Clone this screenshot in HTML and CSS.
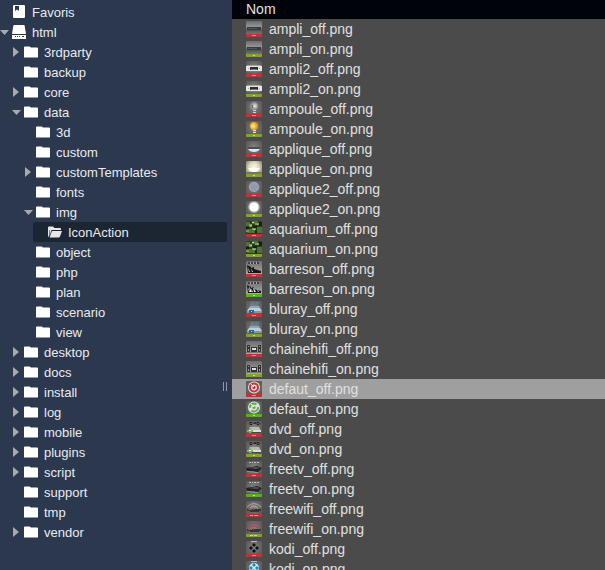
FILE: index.html
```html
<!DOCTYPE html>
<html lang="fr">
<head>
  <meta charset="UTF-8">
  <title>IconAction</title>
  <link rel="stylesheet" href="styles.css">
</head>
<body>

  <!-- Icônes -->
  <svg class="sprites" aria-hidden="true">
    <defs>
      <radialGradient id="tile" cx=".5" cy=".4" r=".8">
        <stop offset="0" stop-color="#858585"/><stop offset=".5" stop-color="#646464"/><stop offset="1" stop-color="#4e4e4e"/>
      </radialGradient>
      <linearGradient id="shelf" x1="0" y1="0" x2="0" y2="1">
        <stop offset="0" stop-color="#6c6c6c"/><stop offset=".35" stop-color="#949494"/><stop offset=".6" stop-color="#5a5a5a"/><stop offset="1" stop-color="#888"/>
      </linearGradient>
      <linearGradient id="silver" x1="0" y1="0" x2="0" y2="1">
        <stop offset="0" stop-color="#6d6d6d"/><stop offset="1" stop-color="#b8b8b8"/>
      </linearGradient>
      <radialGradient id="glow">
        <stop offset="0" stop-color="#fff"/><stop offset=".6" stop-color="#f8f8f2"/><stop offset="1" stop-color="#777" stop-opacity="0"/>
      </radialGradient>
      <radialGradient id="warm" cx=".5" cy=".4" r=".65">
        <stop offset="0" stop-color="#fffbe4"/><stop offset=".5" stop-color="#dad7b9"/><stop offset="1" stop-color="#77766a"/>
      </radialGradient>
      <radialGradient id="amber" cx=".4">
        <stop offset="0" stop-color="#fff3b0"/><stop offset=".5" stop-color="#fbc844"/><stop offset="1" stop-color="#e89a12"/>
      </radialGradient>
      <radialGradient id="glass" cx=".6">
        <stop offset="0" stop-color="#f0f0f0"/><stop offset=".5" stop-color="#b0b0b0"/><stop offset="1" stop-color="#888"/>
      </radialGradient>
    </defs>
    <symbol id="right" viewBox="0 0 15 20"><path fill="#aaa" d="M4 5l6 5-6 5z"/></symbol>
    <symbol id="down" viewBox="0 0 15 20"><path fill="#aaa" d="M3 8h9l-4.500 5z"/></symbol>
    <symbol id="folder" viewBox="0 0 14 14"><path fill="#fff" d="M1 1.500h4.500l1.500 1H13q1 0 1 1v8.500q0 .5-1 .5H1q-1 0-1-.5v-9.500q0-1 1-1z"/></symbol>
    <symbol id="open" viewBox="0 0 14 14"><path fill="#e4e6e8" d="M1 1.500h4l1.500 1.500H12q1 0 1 1v1H3.500L1.500 11V5H1v7q-1-.5-1-1.500v-8q0-1 1-1zM4 6h10l-2 5.500q-.3 1-1.500 1H1.500z"/></symbol>
    <symbol id="book" viewBox="0 0 14 14"><path fill="#fff" fill-rule="evenodd" d="M2 0h10q1 0 1 1v11q0 1-1 1H2q-1 0-1-1V1q0-1 1-1zM3 1v5l2-1.500L7 6V1z"/></symbol>
    <symbol id="drive" viewBox="0 0 14 14"><path fill="#fff" fill-rule="evenodd" d="M2 0h10q.5 0 .6.5L14 9H0L1.400.5Q1.500 0 2 0zM0 10h14v4H0zM3 11v1h1v-1zM5 11v1h1v-1zM7 11v1h1v-1zM10 11v1h2v-1z"/></symbol>

    <symbol id="ampli" viewBox="0 0 16 16"><path fill="url(#shelf)" d="M0 0h16v16H0z"/><path fill="#353b3e" d="M1 6h14v3H1z"/><path fill="#4e575b" d="M2 7h9v1H2z"/><path fill="#555" d="M0 9h16v1H0z"/></symbol>
    <symbol id="ampli2" viewBox="0 0 16 16"><path fill="url(#tile)" d="M0 0h16v16H0z"/><path fill="#a4a4a4" d="M1 4h14v1H1z"/><path fill="#e6e6e2" d="M0 5h16v5H0z"/><path fill="#2d2d2d" d="M4 6h8v3H4z"/><path fill="#777" d="M5 8h6v1H5zM1 10h14v1H1z"/><path fill="#b0b0b0" d="M2 7h1v1H2zM13 7h1v1h-1z"/></symbol>
    <symbol id="bulb-off" viewBox="0 0 16 16"><path fill="url(#tile)" d="M0 0h16v16H0z"/><path fill="url(#glass)" d="M8 1q4 0 4 4 0 2-2 4H6Q4 7 4 5q0-4 4-4z"/><path fill="#666" d="M6 4h1v3H6z"/><path fill="#ccc" d="M7 9h3v3H7z"/><path fill="#777" d="M7 10h3v1H7z"/></symbol>
    <symbol id="bulb-on" viewBox="0 0 16 16"><path fill="url(#tile)" d="M0 0h16v16H0z"/><path fill="url(#amber)" d="M8 1q4 0 4 4 0 2-2 4H6Q4 7 4 5q0-4 4-4z"/><path fill="#ddd" d="M7 9h3v3H7z"/><path fill="#b58e46" d="M7 10h3v1H7z"/></symbol>
    <symbol id="lamp-off" viewBox="0 0 16 16"><path fill="url(#tile)" d="M0 0h16v16H0z"/><path fill="#4e4e4e" d="M2 6h12v2H2z"/><path fill="#dfe5ec" d="M2 8h12q-2 3-6 3T2 8z"/></symbol>
    <symbol id="lamp-on" viewBox="0 0 16 16"><path fill="url(#warm)" d="M0 0h16v16H0z"/><path fill="#fff" d="M2 7h12q-2 4-6 4T2 7z"/><path fill="#77766a" d="M0 11h16v2H0z"/></symbol>
    <symbol id="spot-off" viewBox="0 0 16 16"><path fill="url(#tile)" d="M0 0h16v16H0z"/><circle cx="8" cy="6" r="5" fill="#a3adba"/><circle cx="8" cy="6" r="4" fill="#909cae"/></symbol>
    <symbol id="spot-on" viewBox="0 0 16 16"><path fill="url(#tile)" d="M0 0h16v16H0z"/><circle cx="8" cy="6" r="7" fill="url(#glow)"/><circle cx="8" cy="6" r="4" fill="#fff"/></symbol>
    <symbol id="aquarium" viewBox="0 0 16 16"><path fill="#2a3c20" d="M0 0h16v16H0z"/><path fill="#4e7138" d="M0 1h4v4H0zM6 0h6v3H6zM1 8h8v4H1zM11 6h5v6h-5z"/><path fill="#759854" d="M3 3h3v3H3zM9 2h4v2H9zM6 7h4v2H6zM0 9h3v2H0z"/><path fill="#acc083" d="M4 4h2v1H4zM11 3h1v1h-1zM7 8h2v1H7z"/><path fill="#16220f" d="M7 5h4v2H7zM0 6h3v2H0zM13 1h3v4h-3zM9 10h2v2H9z"/><path fill="#ccd6b9" d="M6 1h2v1H6z"/></symbol>
    <symbol id="barreson" viewBox="0 0 16 16"><path fill="url(#silver)" d="M0 0h16v16H0z"/><path fill="#404040" d="M2 1h11v2H2z"/><path fill="#aaa" d="M4 1h1v2H4zM7 1h1v2H7zM10 1h1v2h-1z"/><path fill="#151515" d="M1 4l4 2v1l3-1v2l7 2v2H2z"/><path fill="#eee" d="M2 6l2 5H3zM5 7l2 4H6z"/></symbol>
    <symbol id="barreson-on" viewBox="0 0 16 16"><use href="#barreson"/><path fill="#eee" d="M3 5l3 6H4zM7 6l3 5H8zM11 8l2 3h-1z"/></symbol>
    <symbol id="bluray" viewBox="0 0 16 16"><path fill="url(#tile)" d="M0 0h16v16H0z"/><path fill="none" stroke="#4f91b3" d="M5 2h3M5 4h3M10 2h3M9 4h3"/><path fill="#8aaabc" d="M4 5h9l1 2H3z"/><path fill="#c3ccd2" d="M3 7h11l2 3H1z"/><path fill="#88949b" d="M1 10h15v2H1z"/><path fill="#1768a1" d="M3 9h5v3H3z"/><path fill="#b6ddf5" d="M5 10h1v1H5z"/></symbol>
    <symbol id="chaine" viewBox="0 0 16 16"><path fill="url(#silver)" d="M0 0h16v16H0z"/><path fill="#333" d="M1 4h3v7H1zM12 4h3v7h-3zM5 6h6v5H5z"/><path fill="#ddd" d="M6 7h4v2H6z"/><path fill="#999" d="M2 5h1v1H2zM2 8h1v2H2zM13 5h1v1h-1zM13 8h1v2h-1z"/><path fill="#777" d="M0 11h16v1H0z"/></symbol>
    <symbol id="defaut-off" viewBox="0 0 16 16"><path fill="url(#tile)" d="M0 0h16v16H0z"/><circle cx="8" cy="6.500" r="6" fill="#ddd"/><circle cx="8" cy="6.500" r="4" fill="none" stroke="#c5343a" stroke-width="2"/><circle cx="8" cy="6.500" r="1.500" fill="#c5343a"/><path stroke="#eee" d="M5 3l3 3"/></symbol>
    <symbol id="defaut-on" viewBox="0 0 16 16"><path fill="url(#tile)" d="M0 0h16v16H0z"/><circle cx="8" cy="6.500" r="6" fill="#dde4da"/><circle cx="8" cy="6.500" r="4" fill="none" stroke="#63a653" stroke-width="2" stroke-dasharray="9 3"/><circle cx="8" cy="6.500" r="1.500" fill="#63a653"/><path stroke="#eee" d="M5 3l3 3"/></symbol>
    <symbol id="dvd" viewBox="0 0 16 16"><path fill="url(#tile)" d="M0 0h16v16H0z"/><path fill="none" stroke="#222" d="M4 1.500h2l1 1-1 1H4zM8 1l1 2 1-2M11 1.500h2l1 1-1 1h-2z"/><path fill="#b8b8b8" d="M4 6h9l2 4H2z"/><path fill="#ddd" d="M2 9h13v2H2z"/><path fill="#464646" d="M6 11h9v1H6z"/><path fill="#83ad69" d="M1 9h6v2H1zM3 7h2v5H3z"/><path fill="#eee" d="M3 9h2v1H3z"/></symbol>
    <symbol id="freetv" viewBox="0 0 16 16"><path fill="url(#tile)" d="M0 0h16v16H0z"/><path fill="#bbb" d="M3 1h2v1H3zM6 1h1v1H6zM8 1h2v1H8zM11 1h2v1h-2z"/><path fill="#222" d="M0 7l11-2 5 2-4 4-11-1z"/><path fill="#555" d="M2 7l9-1 3 1-4 1z"/><path fill="#999" d="M1 10l11 1v1L1 11z"/></symbol>
    <symbol id="freewifi" viewBox="0 0 16 16"><path fill="url(#tile)" d="M0 0h16v16H0z"/><path fill="none" stroke="#aaa" d="M1 6q7-7 14 0M4 7q4-4 8 0"/><path fill="#353535" d="M1 8h14v2H1zM4 10h9v1H4z"/><path fill="#b54b39" d="M2 8h4v1H2zM7 7h1v2H7z"/></symbol>
    <symbol id="freewifi-red" viewBox="0 0 16 16"><path fill="url(#tile)" d="M0 0h16v16H0z"/><path fill="none" stroke="#b83a54" d="M1 6q7-7 14 0M4 7q4-4 8 0"/><path fill="#353535" d="M1 8h14v2H1zM4 10h9v1H4z"/><path fill="#b54b39" d="M2 8h4v1H2zM7 7h1v2H7z"/></symbol>
    <symbol id="kodi-off" viewBox="0 0 16 16"><path fill="url(#tile)" d="M0 0h16v16H0z"/><path fill="#bbb" d="M5 0h6v1H5z"/><path fill="#111" d="M8 2l2 2-2 2-2-2zM5 5l2 2-2 2-2-2zM11 5l2 2-2 2-2-2zM8 8l2 2-2 2-2-2z"/></symbol>
    <symbol id="kodi-on" viewBox="0 0 16 16"><path fill="url(#tile)" d="M0 0h16v16H0z"/><path fill="#bbb" d="M5 0h6v1H5z"/><circle cx="8" cy="7" r="5" fill="#c9ebf8"/><path fill="#168dc1" d="M8 2l2 2-2 2-2-2zM5 5l2 2-2 2-2-2zM11 5l2 2-2 2-2-2zM8 8l2 2-2 2-2-2z"/></symbol>
    <symbol id="off" viewBox="0 0 16 16"><path fill="#df242d" d="M0 13h16v3H0z"/><path fill="#f08a8e" d="M6 14h4v1H6z"/></symbol>
    <symbol id="off-wide" viewBox="0 0 16 16"><path fill="#df242d" d="M0 13h16v3H0z"/><path fill="#f08a8e" d="M4 14h3v1H4zM8 14h4v1H8z"/></symbol>
    <symbol id="on" viewBox="0 0 16 16"><path fill="#83a51c" d="M0 13h16v3H0z"/><path fill="#c9d98d" d="M7 14h2v1H7z"/></symbol>
    <symbol id="on-wide" viewBox="0 0 16 16"><path fill="#83a51c" d="M0 13h16v3H0z"/><path fill="#c9d98d" d="M4 14h3v1H4zM8 14h3v1H8z"/></symbol>
    <symbol id="on-bright" viewBox="0 0 16 16"><path fill="#55b800" d="M0 13h16v3H0z"/><path fill="#b4e48a" d="M7 14h2v1H7z"/></symbol>
  </svg>

  <div class="finder">
    <nav class="sidebar">
      <ul class="tree" id="tree"></ul>
      <div class="handle"></div>
    </nav>

    <main class="files">
      <table>
        <thead><tr><th>Nom</th></tr></thead>
        <tbody id="files"></tbody>
      </table>
    </main>
  </div>

  <script src="script.js"></script>
</body>
</html>
```

FILE: styles.css
```css
body {
  margin: 0;
  font-family: "Liberation Sans", Arial, sans-serif;
  background: #4b4b4b;
  color: #e0e0e0;
  overflow: hidden;
}

.sprites {
  position: absolute;
  width: 0;
  height: 0;
}

.finder {
  display: flex;
  height: 100vh;
}

.sidebar {
  position: relative;
  flex: 0 0 232px;
  box-sizing: border-box;
  padding: 2px 5px 0 0;
  background: #2b384e;
  overflow: hidden;
}

.tree,
.tree ul {
  list-style: none;
  margin: 0;
  padding: 0;
}

.tree {
  margin-left: -3px;
}

.tree ul {
  padding-left: 12px;
}

.tree a {
  display: flex;
  align-items: center;
  height: 20px;
  border-radius: 2px;
  font-size: 13px;
  color: #e9ebee;
  text-decoration: none;
}

.tree a.active {
  background: #1c2632;
}

.arrow {
  width: 15px;
  height: 20px;
}

.icon {
  width: 14px;
  height: 14px;
  margin-right: 6px;
}

/* poignée de redimensionnement */
.handle {
  position: absolute;
  right: 5px;
  top: 67%;
  width: 2px;
  height: 9px;
  border: solid #9299a4;
  border-width: 0 1px;
  cursor: ew-resize;
}

.files {
  flex: 1;
  min-width: 0;
  overflow: hidden;
}

table {
  width: 100%;
  border-collapse: collapse;
}

th,
td {
  padding: 0 14px;
  font-size: 14px;
  font-weight: normal;
  text-align: left;
}

th {
  height: 19px;
  line-height: 19px;
  background: #000309;
}

.file {
  display: flex;
  align-items: center;
  gap: 7px;
  height: 20px;
}

.thumb {
  width: 16px;
  height: 16px;
  border-radius: 1px;
}

.hover {
  background: #9f9f9f;
}
```

FILE: script.js
```javascript
// [nom, flèche, icône, enfants]
const folders = [
  ["Favoris", "", "book"],
  ["html", "down", "drive", [
    ["3rdparty", "right"],
    ["backup"],
    ["core", "right"],
    ["data", "down", "folder", [
      ["3d"],
      ["custom"],
      ["customTemplates", "right"],
      ["fonts"],
      ["img", "down", "folder", [["IconAction", "", "open"]]],
      ["object"],
      ["php"],
      ["plan"],
      ["scenario"],
      ["view"]
    ]],
    ["desktop", "right"],
    ["docs", "right"],
    ["install", "right"],
    ["log", "right"],
    ["mobile", "right"],
    ["plugins", "right"],
    ["script", "right"],
    ["support"],
    ["tmp"],
    ["vendor", "right"]
  ]]
];

// [nom, vignette off, vignette on, bandeau off, bandeau on]
const icons = [
  ["ampli", "ampli", "ampli", "off", "on"],
  ["ampli2", "ampli2", "ampli2", "off", "on"],
  ["ampoule", "bulb-off", "bulb-on", "off", "on"],
  ["applique", "lamp-off", "lamp-on", "off", "on"],
  ["applique2", "spot-off", "spot-on", "off", "on"],
  ["aquarium", "aquarium", "aquarium", "off", "on"],
  ["barreson", "barreson", "barreson-on", "off", "on-bright"],
  ["bluray", "bluray", "bluray", "off", "on"],
  ["chainehifi", "chaine", "chaine", "off", "on"],
  ["defaut", "defaut-off", "defaut-on", "off", "on-bright"],
  ["dvd", "dvd", "dvd", "off", "on"],
  ["freetv", "freetv", "freetv", "off", "on-bright"],
  ["freewifi", "freewifi", "freewifi-red", "off-wide", "on-wide"],
  ["kodi", "kodi-off", "kodi-on", "off", "on"]
];

function renderTree(list) {
  return list.map(([name, arrow, icon, children]) => `
    <li>
      <a href="#${name}" class="${icon === "open" ? "active" : ""}">
        <svg class="arrow">${arrow ? `<use href="#${arrow}"/>` : ""}</svg>
        <svg class="icon"><use href="#${icon || "folder"}"/></svg>
        <span>${name}</span>
      </a>
      ${children ? `<ul>${renderTree(children)}</ul>` : ""}
    </li>`).join("");
}

function renderFile(name, thumb, band) {
  return `
    <tr class="${name === "defaut_off.png" ? "hover" : ""}">
      <td>
        <div class="file">
          <svg class="thumb"><use href="#${thumb}"/><use href="#${band}"/></svg>
          <span>${name}</span>
        </div>
      </td>
    </tr>`;
}

document.getElementById("tree").innerHTML = renderTree(folders);
document.getElementById("files").innerHTML = icons.map(([name, off, on, offBand, onBand]) =>
  renderFile(name + "_off.png", off, offBand) + renderFile(name + "_on.png", on, onBand)
).join("");
```
